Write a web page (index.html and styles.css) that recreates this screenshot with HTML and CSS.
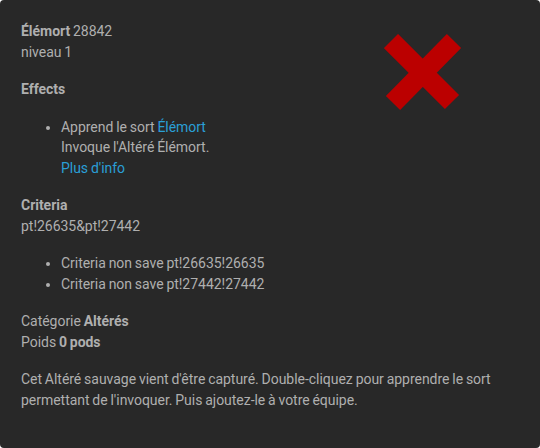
FILE: index.html
```html
<!DOCTYPE html>
<html lang="fr">
<head>
<meta charset="utf-8">
<title>Élémort</title>
<link rel="stylesheet" href="styles.css">
</head>
<body>
<div class="card">
  <svg class="cross" width="80" height="78" viewBox="0 0 80 78" aria-hidden="true">
    <line x1="7" y1="7" x2="68" y2="68" />
    <line x1="70" y1="7" x2="9" y2="69" />
  </svg>
  <p class="block"><b>Élémort</b> 28842<br>niveau 1</p>
  <p class="block"><b>Effects</b></p>
  <ul class="list">
    <li>Apprend le sort <a href="#">Élémort</a><br>Invoque l'Altéré Élémort.<br><a href="#">Plus d'info</a></li>
  </ul>
  <p class="block"><b>Criteria</b><br>pt!26635&amp;pt!27442</p>
  <ul class="list">
    <li>Criteria non save pt!26635!26635</li>
    <li>Criteria non save pt!27442!27442</li>
  </ul>
  <p class="block">Catégorie <b>Altérés</b><br>Poids <b>0 pods</b></p>
  <p class="block">Cet Altéré sauvage vient d'être capturé. Double-cliquez pour apprendre le sort permettant de l'invoquer. Puis ajoutez-le à votre équipe.</p>
</div>
</body>
</html>
```
FILE: styles.css
```css
html, body {
  margin: 0;
  padding: 0;
  background: #ffffff;
}
.card {
  position: relative;
  box-sizing: border-box;
  width: 540px;
  height: 448px;
  background: #282828;
  border-radius: 4px;
  padding: 21px 21px;
  color: #afafaf;
  font-family: Roboto, "Liberation Sans", sans-serif;
  font-size: 14px;
  line-height: 20.5px;
  word-spacing: -0.6px;
  letter-spacing: -0.03px;
}
.block {
  margin: 0 0 17px 0;
}
.list {
  margin: 0 0 17px 0;
  padding-left: 40px;
}
b {
  font-weight: 700;
}
a {
  color: #2a9fd6;
  text-decoration: none;
}
.cross {
  position: absolute;
  left: 384px;
  top: 34px;
}
.cross line {
  stroke: #bb0000;
  stroke-width: 20;
  stroke-linecap: butt;
}
```
